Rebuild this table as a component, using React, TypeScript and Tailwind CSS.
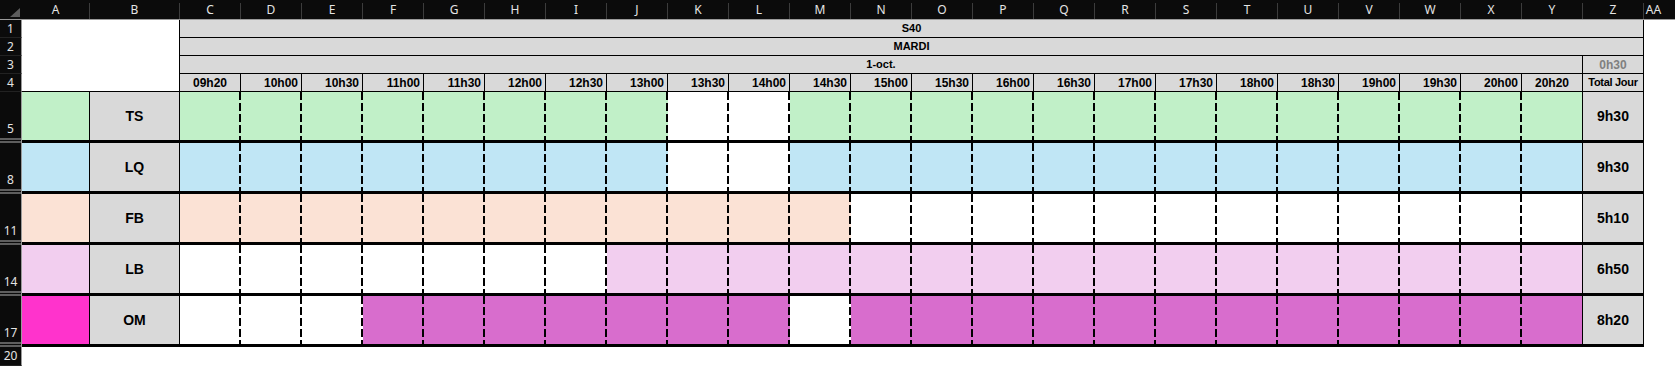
import React from "react";

const letters = ["A", "B", "C", "D", "E", "F", "G", "H", "I", "J", "K", "L", "M", "N", "O", "P", "Q", "R", "S", "T", "U", "V", "W", "X", "Y", "Z", "AA"];
const widths: Record<string, string> = { A: "w-[68px]", B: "w-[90px]", AA: "w-[19px]" };

const times = ["09h20", "10h00", "10h30", "11h00", "11h30", "12h00", "12h30", "13h00", "13h30", "14h00", "14h30", "15h00", "15h30", "16h00", "16h30", "17h00", "17h30", "18h00", "18h30", "19h00", "19h30", "20h00", "20h20"];

// x = filled with the row colour, o = left white
const people = [
  { n: "5", name: "TS", total: "9h30", a: "bg-[#c1f0c8]", fill: "bg-[#c1f0c8]", slots: "xxxxxxxxooxxxxxxxxxxxxx" },
  { n: "8", name: "LQ", total: "9h30", a: "bg-[#c0e6f5]", fill: "bg-[#c0e6f5]", slots: "xxxxxxxxooxxxxxxxxxxxxx" },
  { n: "11", name: "FB", total: "5h10", a: "bg-[#fbe2d5]", fill: "bg-[#fbe2d5]", slots: "xxxxxxxxxxxoooooooooooo" },
  { n: "14", name: "LB", total: "6h50", a: "bg-[#f2ceef]", fill: "bg-[#f2ceef]", slots: "oooooooxxxxxxxxxxxxxxxx" },
  { n: "17", name: "OM", total: "8h20", a: "bg-[#ff33cc]", fill: "bg-[#d86dcd]", slots: "oooxxxxxxxoxxxxxxxxxxxx" },
];

function RowNum({ n }: { n: string }) {
  return (
    <div className="flex w-[22px] shrink-0 items-center justify-center border-r border-b border-[#9a9a9a] border-b-[#222] bg-[#0b0b0b] font-['Noto_Sans',sans-serif] text-[12px] text-[#e4e4e4]">
      {n}
    </div>
  );
}

function BlockNum({ n }: { n: string }) {
  return (
    <div className="flex w-[22px] shrink-0 flex-col border-r border-[#9a9a9a] bg-[#0b0b0b] font-['Noto_Sans',sans-serif] text-[12px] text-[#e4e4e4]">
      <div className="flex flex-1 items-end justify-center leading-[14px]">{n}</div>
      <div className="mt-[2px] h-[5px] border-y-2 border-[#5e5e5e]" />
    </div>
  );
}

export default function App() {
  return (
    <div className="h-[366px] w-[1675px] overflow-hidden bg-white font-['Liberation_Sans',Arial,sans-serif] text-black">
      {/* column letters */}
      <div className="flex h-[20px] border-b border-[#9a9a9a] bg-[#0b0b0b] font-['Noto_Sans',sans-serif] text-[12px] text-[#e4e4e4]">
        <div className="relative w-[22px] shrink-0">
          <svg width="22" height="19" className="absolute left-0 top-0">
            <polygon points="20,8 20,17 10,17" fill="#5c5c5c" />
          </svg>
        </div>
        {letters.map((l) => (
          <div key={l} className={`flex shrink-0 items-end ${widths[l] ?? "w-[61px]"}`}>
            <span className="flex-1 self-center text-center leading-[19px]">{l}</span>
            {l !== "AA" && <div className="h-[16px] w-px bg-[#3c3c3c]" />}
          </div>
        ))}
      </div>

      {/* rows 1-3 */}
      <div className="flex h-[18px]">
        <RowNum n="1" />
        <div className="w-[158px] shrink-0 border-r border-black bg-white" />
        <div className="flex w-[1464px] shrink-0 items-center justify-center border-r border-b border-black bg-[#d9d9d9] text-[11px] font-bold">S40</div>
      </div>
      <div className="flex h-[18px]">
        <RowNum n="2" />
        <div className="w-[158px] shrink-0 border-r border-black bg-white" />
        <div className="flex w-[1464px] shrink-0 items-center justify-center border-r border-b border-black bg-[#d9d9d9] text-[11px] font-bold">MARDI</div>
      </div>
      <div className="flex h-[18px]">
        <RowNum n="3" />
        <div className="w-[158px] shrink-0 border-r border-black bg-white" />
        <div className="flex w-[1403px] shrink-0 items-center justify-center border-r border-b border-black bg-[#d9d9d9] text-[11px] font-bold">1-oct.</div>
        <div className="flex w-[61px] shrink-0 items-center justify-center border-r border-b border-black bg-[#d9d9d9] text-[12px] font-bold text-[#808080]">0h30</div>
      </div>

      {/* row 4: time slots */}
      <div className="flex h-[18px]">
        <RowNum n="4" />
        <div className="w-[158px] shrink-0 border-r border-b border-black bg-white" />
        {times.map((t, i) => (
          <div
            key={t}
            className={`flex w-[61px] shrink-0 items-center border-r border-b border-black bg-[#d9d9d9] text-[12px] font-bold ${i === 0 || i === times.length - 1 ? "justify-center" : "justify-end pr-[3px]"}`}
          >
            {t}
          </div>
        ))}
        <div className="flex w-[61px] shrink-0 items-center justify-center border-r border-b border-black bg-[#d9d9d9] text-[11px] font-bold tracking-[-0.3px]">Total Jour</div>
      </div>

      {/* people */}
      {people.map((p) => (
        <div key={p.name} className="flex h-[51px]">
          <BlockNum n={p.n} />
          <div className="flex border-b-[3px] border-black">
            <div className={`w-[68px] shrink-0 border-r border-black ${p.a}`} />
            <div className="flex w-[90px] shrink-0 items-center justify-center border-r border-black bg-[#d9d9d9] text-[14px] font-bold">{p.name}</div>
            {p.slots.split("").map((s, i) => {
              const last = i === p.slots.length - 1;
              return (
                <div key={i} className={`flex w-[61px] shrink-0 ${s === "x" ? p.fill : "bg-white"} ${last ? "border-r border-black" : ""}`}>
                  <div className="flex-1" />
                  {!last && <div className="w-[2px] bg-[repeating-linear-gradient(to_bottom,#000_0px,#000_8px,transparent_8px,transparent_11px)]" />}
                </div>
              );
            })}
            <div className="flex w-[61px] shrink-0 items-center justify-center border-r border-black bg-[#d9d9d9] text-[14px] font-bold">{p.total}</div>
          </div>
        </div>
      ))}

      <div className="flex h-[19px]">
        <RowNum n="20" />
        <div className="flex-1 bg-white" />
      </div>
    </div>
  );
}
